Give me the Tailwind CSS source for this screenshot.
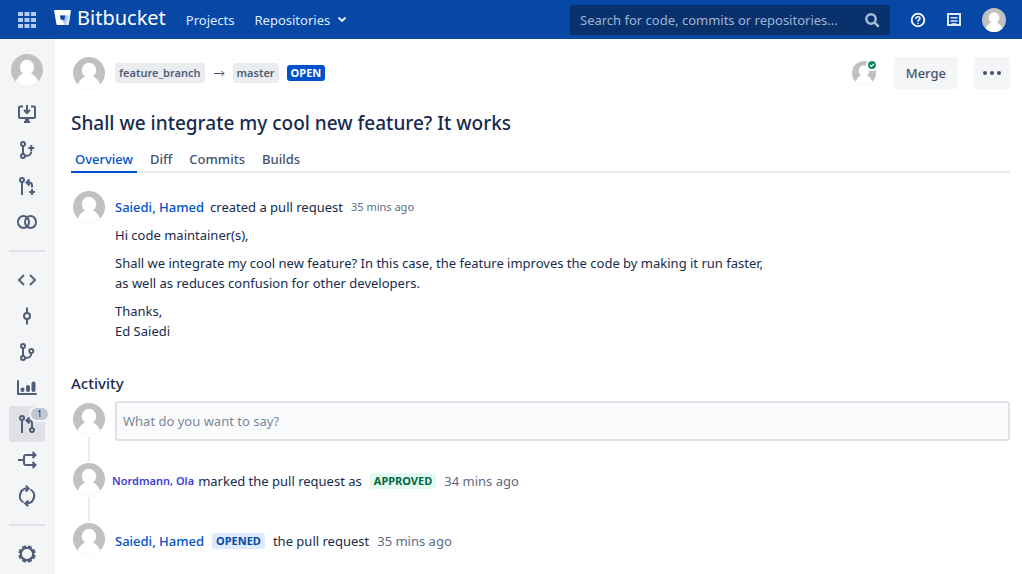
<!DOCTYPE html>
<html lang="en">
<head>
<meta charset="utf-8">
<meta name="viewport" content="width=device-width, initial-scale=1">
<title>Pull request - Bitbucket</title>
<script src="https://cdn.jsdelivr.net/npm/@tailwindcss/browser@4"></script>
</head>
<body class="flex min-h-screen flex-col bg-white font-['Noto_Sans','Open_Sans',sans-serif] text-[13px] leading-5 text-[#172b4d]">
<svg class="absolute size-0" aria-hidden="true">
  <clipPath id="round"><circle cx="16" cy="16" r="16"/></clipPath>
  <symbol id="avatar" viewBox="0 0 32 32">
    <g clip-path="url(#round)"><rect width="32" height="32" fill="#c1c1c1"/><ellipse cx="16" cy="13.200" rx="7.200" ry="7.400" fill="#fff"/><path d="M4.500 28C7 22 10.500 20 13 19h6c2.500 1 6 3 8.500 9v4h-23z" fill="#fff"/></g>
  </symbol>
</svg>

<header class="flex h-[39px] shrink-0 items-center bg-[#0747a6] pr-4 pl-[18px] text-[#deebff]">
  <button aria-label="Applications" class="mr-[18px]"><svg class="size-[18px]" viewBox="0 0 18 18" fill="#b3cbf0"><path d="M0 1h5v4H0zM6.500 1h5v4h-5zM13 1h5v4h-5zM0 7h5v4H0zM6.500 7h5v4h-5zM13 7h5v4h-5zM0 13h5v4H0zM6.500 13h5v4h-5zM13 13h5v4h-5z"/></svg></button>
  <a href="#" class="mr-5 flex items-center gap-1.5 pb-1 text-xl leading-6 text-white">
    <svg class="size-[17px]" viewBox="0 0 16 16"><defs><linearGradient id="fade" x1="0" y1="0" x2="1" y2=".3"><stop stop-color="#5b8fd8"/><stop offset="1" stop-color="#e6eefa"/></linearGradient></defs><path fill="#fff" d="M.6 1h14.800c.4 0 .6.3.5.700L13.900 14.300c-.1.400-.4.700-.8.700H3.100c-.4 0-.7-.3-.8-.7L.1 1.700C0 1.300.2 1 .6 1z"/><path fill="url(#fade)" d="M6 6h9.200l-1.300 8.300c-.1.400-.4.700-.8.700H10z"/><path fill="#0747a6" d="M5.600 6h4.900l-.7 4.200H6.300z"/></svg>
    Bitbucket</a>
  <nav class="flex items-center gap-5">
    <a href="#">Projects</a>
    <button class="flex items-center gap-[7px]">Repositories <svg class="size-2.5" viewBox="0 0 10 10" fill="none" stroke="currentColor" stroke-width="2" stroke-linecap="round" stroke-linejoin="round"><path d="M2 3l3 3 3-3"/></svg></button>
  </nav>
  <label class="ml-auto flex h-[30px] w-80 items-center rounded-[3px] bg-[#09326c] pr-2.5 pl-2.5">
    <input type="text" aria-label="Search" placeholder="Search for code, commits or repositories..." class="min-w-0 flex-1 bg-transparent outline-none placeholder:text-[#9fb4d6]">
    <svg class="size-4" viewBox="0 0 16 16" fill="none" stroke="#a5b8d8" stroke-width="2.500" stroke-linecap="round"><circle cx="7" cy="7" r="4.700"/><path d="M10.700 10.700l3.300 3.300"/></svg>
  </label>
  <button aria-label="Help" class="ml-5"><svg class="size-4" viewBox="0 0 16 16" fill="none" stroke="#fff" stroke-width="1.800" stroke-linecap="round"><circle cx="8" cy="8" r="6.300"/><path stroke-width="1.500" d="M6 6.500C6 4 10 4 10 6.500 10 8 8 7.800 8 9.300M8 11.400v.1"/></svg></button>
  <button aria-label="Feedback" class="ml-5"><svg class="size-4" viewBox="0 0 16 16" fill="none" stroke="#deebff" stroke-width="2"><path d="M2 2h12v11H2z"/><path stroke-width="1.600" d="M4.500 5.800h7M4.500 9h7"/><path d="M5.500 12.200h5"/></svg></button>
  <button aria-label="Profile" class="ml-5"><svg class="size-6"><use href="#avatar"/></svg></button>
</header>

<div class="flex flex-1">
  <aside class="flex w-[55px] shrink-0 flex-col bg-[#f4f5f7] px-[9px] pt-[15px] text-[#505f79]">
    <a href="#" aria-label="Repository" class="mb-2.5 ml-0.5"><svg class="size-8"><use href="#avatar"/></svg></a>
    <nav class="flex flex-col [&_a]:flex [&_a]:h-9 [&_a]:w-9 [&_a]:items-center [&_a]:justify-center [&_a]:rounded-[3px] [&_svg]:size-6 [&_svg]:fill-none [&_svg]:stroke-current [&_svg]:stroke-2">
      <a href="#" aria-label="Clone"><svg viewBox="0 0 24 24"><path d="M8 4.500H5a1 1 0 0 0-1 1V15a1 1 0 0 0 1 1h14a1 1 0 0 0 1-1V5.500a1 1 0 0 0-1-1h-3M12 3v8M9 8l3 3 3-3M9 20h6"/><path stroke-width="4" d="M12 17v3"/></svg></a>
      <a href="#" aria-label="Create branch"><svg viewBox="0 0 24 24"><circle cx="8" cy="6" r="2"/><circle cx="8" cy="18" r="2"/><path d="M8 8v8M10.500 18c4 0 5.500-1 5.800-4.500M16.300 7v6M13.300 10h6"/></svg></a>
      <a href="#" aria-label="Create pull request"><svg viewBox="0 0 24 24"><circle cx="7" cy="6" r="2"/><path d="M7 8v13M12 8.500h2c2 0 3 1 3 3v2M14.500 5.500l-3 3 3 3M17 15v6M14 18h6"/></svg></a>
      <a href="#" aria-label="Compare"><svg viewBox="0 0 24 24"><ellipse cx="8.500" cy="12" rx="5.500" ry="6"/><ellipse cx="15.500" cy="12" rx="5.500" ry="6"/></svg></a>
      <hr class="my-2.5 h-0.5 w-9 border-0 bg-[#dfe1e6]">
      <a href="#" aria-label="Source"><svg viewBox="0 0 24 24"><path d="M9 7l-5 5 5 5M15 7l5 5-5 5"/></svg></a>
      <a href="#" aria-label="Commits"><svg viewBox="0 0 24 24"><circle cx="12" cy="12" r="3"/><path d="M12 3.500V9M12 15v5.500"/></svg></a>
      <a href="#" aria-label="Branches"><svg viewBox="0 0 24 24"><circle cx="8" cy="6" r="2"/><circle cx="8" cy="18" r="2"/><circle cx="16.300" cy="11" r="2"/><path d="M8 8v8M10.500 18c4 0 5.500-1 5.800-4.500"/></svg></a>
      <a href="#" aria-label="Graphs"><svg viewBox="0 0 24 24"><path stroke-linecap="round" stroke-linejoin="round" d="M3 5v13h18"/><path stroke-width="4" stroke-linecap="round" d="M7.500 13.500v.5M13 11v3M18.500 7.500V14"/></svg></a>
      <a href="#" aria-label="Pull requests" class="relative bg-[#dfe1e6]"><svg viewBox="0 0 24 24"><circle cx="7" cy="6" r="2"/><circle cx="17" cy="18" r="2"/><path d="M7 8v13M12 8.500h2c2 0 3 1 3 3V16M14.500 5.500l-3 3 3 3"/></svg><span class="absolute top-0.5 -right-[3px] flex h-3 w-[17px] items-center justify-center rounded-full bg-[#c1c7d0] text-[9px] text-[#172b4d] ring-2 ring-[#f4f5f7]">1</span></a>
      <a href="#" aria-label="Forks"><svg viewBox="0 0 24 24"><path d="M3 12h6M20 7h-9a2 2 0 0 0-2 2v6a2 2 0 0 0 2 2h9M17.500 4l3 3-3 3M17.500 14l3 3-3 3"/></svg></a>
      <a href="#" aria-label="Builds"><svg viewBox="0 0 24 24"><path d="M8.500 18.500A7.500 7.500 0 0 1 12.800 4.600M15.500 5.500A7.500 7.500 0 0 1 11.200 19.400"/><path d="M10.800 1.800l3 3-3.200 2.700M13.200 22.200l-3-3 3.200-2.700"/></svg></a>
      <hr class="my-2.5 h-0.5 w-9 border-0 bg-[#dfe1e6]">
      <a href="#" aria-label="Settings"><svg viewBox="0 0 24 24"><circle cx="12" cy="12" r="6.200" stroke-width="2.200"/><path stroke-width="4" d="M12 3.400v2.200M12 18.400v2.200M3.400 12h2.200M18.400 12h2.200M5.900 5.900l1.600 1.600M16.500 16.500l1.600 1.600M5.900 18.100l1.600-1.600M16.500 7.500l1.600-1.600" transform="rotate(22.500 12 12)"/></svg></a>
    </nav>
  </aside>

  <main class="min-w-0 flex-1 pr-3 pl-4">
    <div class="mt-[18px] flex h-8 items-center pl-0.5">
      <svg class="mr-2.5 size-8"><use href="#avatar"/></svg>
      <span class="flex h-5 items-center rounded-[3px] bg-[#ebecf0] px-1 text-[11px] font-semibold text-[#505f79]">feature_branch</span>
      <svg class="mx-2 size-3" viewBox="0 0 12 12" fill="none" stroke="#42526e"><path d="M1 6.500h10M8.500 4l2.500 2.500L8.500 9"/></svg>
      <span class="flex h-5 items-center rounded-[3px] bg-[#ebecf0] px-1 text-[11px] font-semibold text-[#505f79]">master</span>
      <span class="ml-2 flex h-4 items-center rounded-[3px] bg-[#0052cc] px-1 text-[11px] font-bold text-white">OPEN</span>
      <span class="relative mr-[18px] ml-auto size-6"><svg class="size-6"><use href="#avatar"/></svg><svg class="absolute top-0 right-0 size-2 rounded-full ring-2 ring-white" viewBox="0 0 10 10"><circle cx="5" cy="5" r="5" fill="#00875a"/><path d="M2.500 5l1.800 1.800 3.200-3.300" fill="none" stroke="#fff" stroke-width="1.500"/></svg></span>
      <button class="mr-4 h-8 rounded-[3px] bg-[#f4f5f7] px-3 font-medium text-[#42526e]">Merge</button>
      <button aria-label="More actions" class="flex h-8 w-9 items-center justify-center rounded-[3px] bg-[#f4f5f7]"><svg class="h-1 w-[18px]" viewBox="0 0 18 4" fill="#42526e"><circle cx="2" cy="2" r="2"/><circle cx="9" cy="2" r="2"/><circle cx="16" cy="2" r="2"/></svg></button>
    </div>
    <h1 class="mt-5 text-[19px] leading-7 font-medium">Shall we integrate my cool new feature? It works</h1>
    <nav class="mt-2 flex gap-[9px] border-b-2 border-[#ebecf0] font-medium text-[#42526e] [&_a]:-mb-0.5 [&_a]:px-1 [&_a]:pt-1 [&_a]:pb-0.5">
      <a href="#" class="border-b-2 border-[#0052cc] text-[#0052cc]">Overview</a><a href="#">Diff</a><a href="#">Commits</a><a href="#">Builds</a>
    </nav>
    <section class="mt-[18px] flex pl-0.5">
      <svg class="mr-2.5 size-8 shrink-0"><use href="#avatar"/></svg>
      <div class="pt-1.5">
        <p class="flex"><a href="#" class="mr-1.5 font-medium text-[#0052cc]">Saiedi, Hamed</a><span>created a pull request</span><span class="ml-2 text-[11px] text-[#5e6c84]">35 mins ago</span></p>
        <p class="mt-2">Hi code maintainer(s),</p>
        <p class="mt-2">Shall we integrate my cool new feature? In this case, the feature improves the code by making it run faster,<br>as well as reduces confusion for other developers.</p>
        <p class="mt-2">Thanks,<br>Ed Saiedi</p>
      </div>
    </section>
    <h2 class="mt-8 text-[15px] leading-5 font-medium">Activity</h2>
    <ul class="mt-2 pl-0.5">
      <li class="flex h-[60px]">
        <div class="mr-2.5 flex flex-col items-center"><svg class="mt-0.5 size-8"><use href="#avatar"/></svg><i class="mt-0.5 h-6 w-0.5 bg-[#ebecf0]"></i></div>
        <input type="text" aria-label="Comment" placeholder="What do you want to say?" class="h-10 min-w-0 flex-1 rounded-[3px] border-2 border-[#dfe1e6] bg-[#fafbfc] px-1.5 outline-none placeholder:text-[#7a869a]">
      </li>
      <li class="flex h-[60px]">
        <div class="mr-[7px] flex flex-col items-center"><svg class="mt-0.5 size-8"><use href="#avatar"/></svg><i class="mt-0.5 h-6 w-0.5 bg-[#ebecf0]"></i></div>
        <div class="flex h-10 items-center"><a href="#" class="mr-1 text-[11px] font-semibold text-[#3b3fd0]">Nordmann, Ola</a>marked the pull request as<span class="mx-2 flex h-4 items-center rounded-[3px] bg-[#e3fcef] px-1 text-[11px] font-bold text-[#006644]">APPROVED</span><span class="text-[#5e6c84]">34 mins ago</span></div>
      </li>
      <li class="flex">
        <svg class="mt-0.5 mr-2.5 size-8"><use href="#avatar"/></svg>
        <div class="flex h-10 items-center"><a href="#" class="font-medium text-[#0052cc]">Saiedi, Hamed</a><span class="mx-2 flex h-4 items-center rounded-[3px] bg-[#deebff] px-1 text-[11px] font-bold text-[#0747a6]">OPENED</span>the pull request<span class="ml-2 text-[#5e6c84]">35 mins ago</span></div>
      </li>
    </ul>
  </main>
</div>
</body>
</html>
